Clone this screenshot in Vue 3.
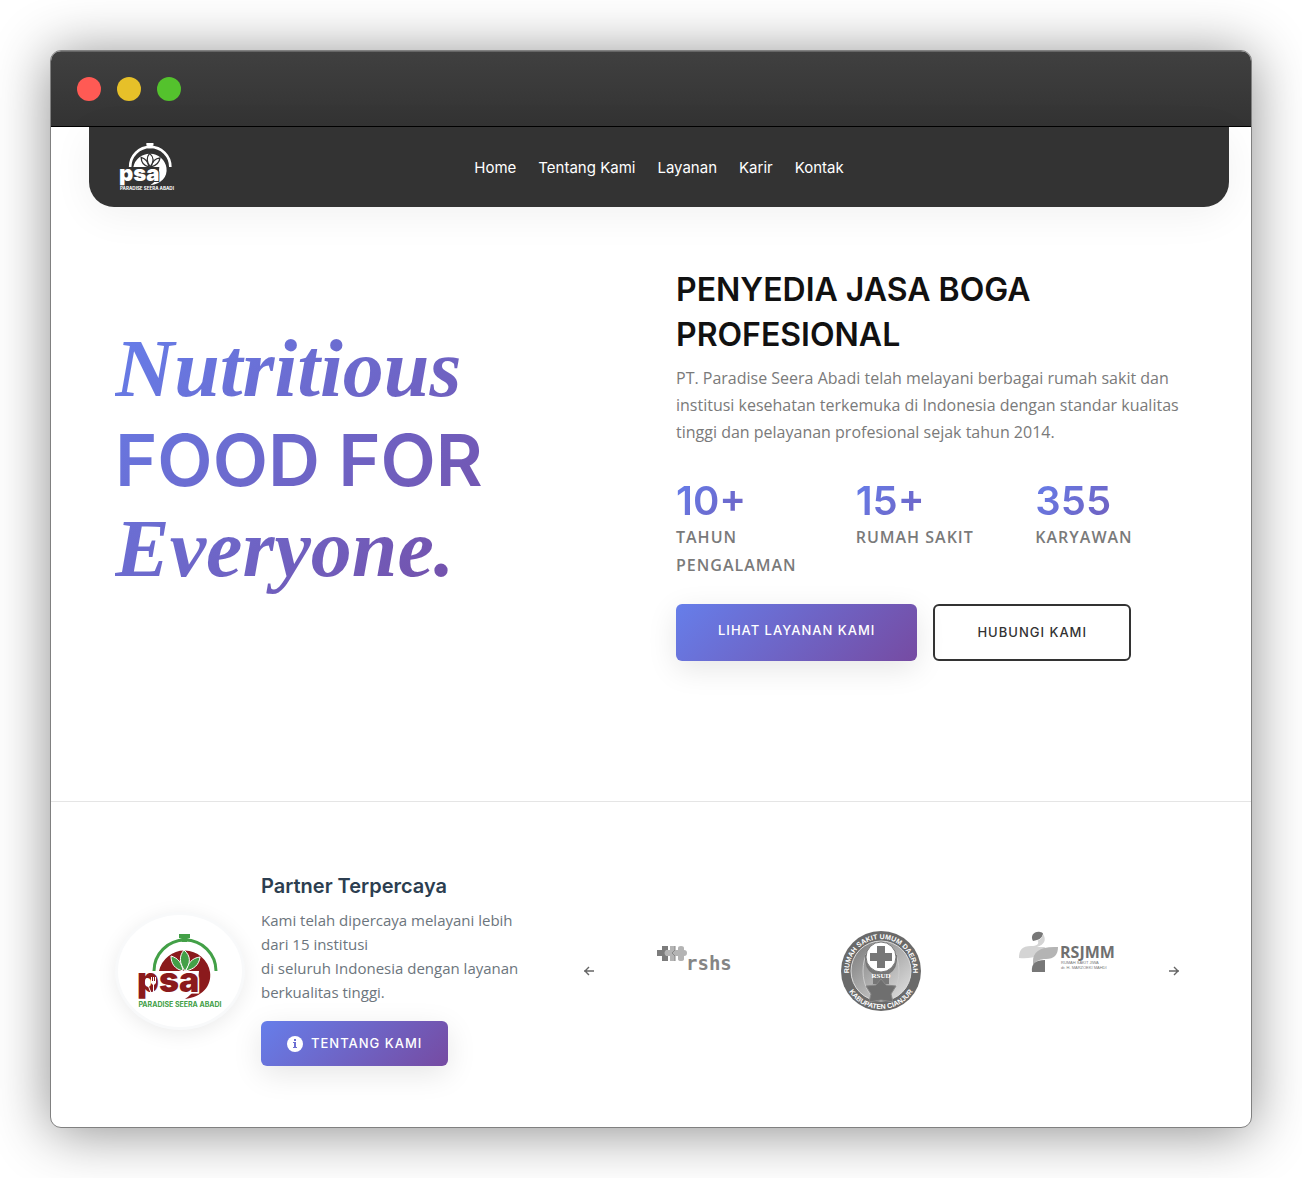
<script setup>
import { ref } from 'vue';

const menu = ['Home', 'Tentang Kami', 'Layanan', 'Karir', 'Kontak'];

const stats = [
    { value: '10+', label: 'Tahun Pengalaman' },
    { value: '15+', label: 'Rumah Sakit' },
    { value: '355', label: 'Karyawan' }
];

const partners = ['rshs', 'rsud', 'rsjmm'];
const start = ref(0);

const partnerAt = (index) => partners[(start.value + index) % partners.length];

const move = (step) => {
    start.value = (start.value + step + partners.length) % partners.length;
};
</script>

<template>
    <div class="window">
        <div class="titlebar">
            <span class="dot red"></span>
            <span class="dot yellow"></span>
            <span class="dot green"></span>
        </div>

        <header class="navWrapper">
            <nav class="navbar">
                <a href="#" class="brand" aria-label="Paradise Seera Abadi">
                    <svg class="logo" viewBox="0 0 86 74">
                        <path fill="none" stroke="#fff" stroke-width="4" d="M17 37a31 31 0 0 1 62 0" />
                        <path fill="#fff" d="M42 0h11v4l-3 1v3h-5V5l-3-1z" />
                        <path fill="#fff" d="M22 37a26 26 0 0 1 51 1c2 14-8 25-25 27 9-6 13-12 14-28z" />
                        <g fill="#fff" stroke="#333" stroke-width="2">
                            <path d="M46 37c-8-2-12-7-12-15 7 2 11 7 12 15z" />
                            <path d="M49 37c8-2 13-6 14-14-8 1-12 6-14 14z" />
                            <path d="M48 37c-6-8-6-15-1-21 7 6 7 13 1 21z" />
                        </g>
                        <text class="psa" x="0" y="58" fill="#fff" stroke="#333">psa</text>
                        <text class="psaName" x="43" y="73" fill="#fff" text-anchor="middle">PARADISE SEERA ABADI</text>
                    </svg>
                </a>
                <ul class="menu">
                    <li v-for="item in menu" :key="item"><a href="#">{{ item }}</a></li>
                </ul>
            </nav>
        </header>

        <section class="hero">
            <h1 class="slogan">
                <em>Nutritious</em><br />FOOD FOR<br /><em>Everyone.</em>
            </h1>
            <div class="intro">
                <h2>PENYEDIA JASA BOGA PROFESIONAL</h2>
                <p>PT. Paradise Seera Abadi telah melayani berbagai rumah sakit dan institusi kesehatan terkemuka di Indonesia dengan standar kualitas tinggi dan pelayanan profesional sejak tahun 2014.</p>
                <div class="stats">
                    <div v-for="stat in stats" :key="stat.label">
                        <div class="value">{{ stat.value }}</div>
                        <div class="label">{{ stat.label }}</div>
                    </div>
                </div>
                <div class="actions">
                    <a href="#" class="btn primary">LIHAT LAYANAN KAMI</a>
                    <a href="#" class="btn outline">HUBUNGI KAMI</a>
                </div>
            </div>
        </section>

        <section class="partners">
            <div class="about">
                <div class="badge">
                    <svg class="badgeLogo" viewBox="0 0 86 74">
                        <path fill="none" stroke="#43a047" stroke-width="3" d="M17 37a31 31 0 0 1 62 0" />
                        <path fill="#43a047" d="M42 0h11v4l-3 1v3h-5V5l-3-1z" />
                        <path fill="#8b1a1c" d="M22 37a26 26 0 0 1 51 1c2 14-8 25-25 27 9-6 13-12 14-28z" />
                        <g fill="#43a047" stroke="#fff" stroke-width="1">
                            <path d="M46 37c-8-2-12-7-12-15 7 2 11 7 12 15z" />
                            <path d="M49 37c8-2 13-6 14-14-8 1-12 6-14 14z" />
                            <path d="M48 37c-6-8-6-15-1-21 7 6 7 13 1 21z" />
                        </g>
                        <text class="psa" x="0" y="58" fill="#8b1a1c" stroke="#fff">psa</text>
                        <g fill="#fff">
                            <ellipse cx="10" cy="48" rx="2" ry="4" />
                            <path d="M10 50h1l4 10h-1zM14 43h1v4h1v-4h1v4h1v-4h1v6l-2 2v9h-1v-9l-2-2z" />
                        </g>
                        <text class="psaName" x="43" y="73" fill="#43a047" text-anchor="middle">PARADISE SEERA ABADI</text>
                    </svg>
                </div>
                <div class="aboutText">
                    <h3>Partner Terpercaya</h3>
                    <p>Kami telah dipercaya melayani lebih dari 15 institusi<br />di seluruh Indonesia dengan layanan berkualitas tinggi.</p>
                    <a href="#" class="btn small">
                        <svg class="info" viewBox="0 0 16 16">
                            <circle cx="8" cy="8" r="8" fill="#fff" />
                            <path fill="#6c6fd3" d="M7 3h2v2H7zM6 6h3v5h1v1H6v-1h1V7H6z" />
                        </svg>
                        TENTANG KAMI
                    </a>
                </div>
            </div>

            <div class="carousel">
                <button type="button" aria-label="Sebelumnya" @click="move(-1)">
                    <svg class="arrow" viewBox="0 0 12 12"><path d="M11 6H1M6 2L2 6l4 4" /></svg>
                </button>
                <div class="slides">
                    <div v-for="index in 3" :key="index" class="slide">
                        <svg v-if="partnerAt(index - 1) === 'rshs'" class="rshs" viewBox="0 0 76 28">
                            <path fill="#7c7c7c" d="M5 1h6v4h4v6h-4v5H5v-5H0V5h5z" />
                            <path fill="#b4b4b4" d="M13 1h5v4h3V3q0-2 3-2t3 2v2q3 0 3 3t-3 3v3q0 2-3 2t-3-2v-3h-3v5h-5v-5H9q-3-3 0-6h4z" />
                            <path fill="none" stroke="#888" d="M18 1v4l-3 3 3 3v5" />
                            <text class="rshsName" x="29" y="25">rshs</text>
                        </svg>
                        <svg v-else-if="partnerAt(index - 1) === 'rsud'" class="rsud" viewBox="0 0 80 80">
                            <defs>
                                <path id="ringTop" d="M8 40a32 32 0 0 1 64 0" />
                                <path id="ringBottom" d="M2 40a38 38 0 0 0 76 0" />
                                <linearGradient id="silver" x1="0" y1="0" x2="1" y2="1">
                                    <stop offset="0" stop-color="#777" />
                                    <stop offset="1" stop-color="#e5e5e5" />
                                </linearGradient>
                            </defs>
                            <circle cx="40" cy="40" r="40" fill="#6a6a6a" />
                            <circle cx="40" cy="40" r="30" fill="url(#silver)" stroke="#ddd" />
                            <ellipse cx="40" cy="40" rx="18" ry="29" fill="none" stroke="#ccc" />
                            <path fill="#777" d="M24 24q-1 14 8 19v10h16V43q9-5 8-19z" />
                            <circle cx="40" cy="26" r="15" fill="#fff" stroke="#777" />
                            <path fill="#777" d="M36 15h8v7h7v8h-7v7h-8v-7h-7v-8h7z" />
                            <path fill="#6f6f6f" stroke="#888" d="M40 48l5 6 10 1-5 8 2 8-12-2-12 2 2-8-5-8 10-1z" />
                            <text class="rsudName" x="40" y="47" text-anchor="middle">RSUD</text>
                            <text class="ring"><textPath href="#ringTop" startOffset="50%" text-anchor="middle">RUMAH SAKIT UMUM DAERAH</textPath></text>
                            <text class="ring"><textPath href="#ringBottom" startOffset="50%" text-anchor="middle">KABUPATEN CIANJUR</textPath></text>
                        </svg>
                        <svg v-else class="rsjmm" viewBox="0 0 98 42">
                            <path fill="#777" d="M14 10c-3-5 1-10 7-9 2 0 3 1 3 2-1 4-4 6-10 7z" />
                            <path fill="#d4d4d4" d="M24 3c4 6 1 11-6 13h8c-3 9-11 12-26 11 0-8 3-12 12-12 6 0 8-2 7-5l-4 1c5-1 8-4 9-8z" />
                            <path fill="#b4b4b4" d="M14 30c0-9 7-15 25-14 0 8-4 12-12 12-6 0-10 2-13 6z" />
                            <path fill="#777" d="M13 41c-1-8 3-12 13-12v12z" />
                            <text class="rsjmmName" x="41" y="27">RSJMM</text>
                            <text class="rsjmmSub" x="42" y="33">RUMAH SAKIT JIWA</text>
                            <text class="rsjmmSub" x="42" y="38">dr. H. MARZOEKI MAHDI</text>
                        </svg>
                    </div>
                </div>
                <button type="button" aria-label="Berikutnya" @click="move(1)">
                    <svg class="arrow" viewBox="0 0 12 12"><path d="M1 6h10M6 2l4 4-4 4" /></svg>
                </button>
            </div>
        </section>
    </div>
</template>

<style>
body {
    margin: 0;
    background: #fff;
}
</style>

<style scoped>
* {
    box-sizing: border-box;
}

.window {
    margin: 50px;
    border: 1px solid #808080;
    border-radius: 11px;
    overflow: hidden;
    background: #fff;
    box-shadow: 0 4px 56px rgba(0, 0, 0, 0.45);
    font-family: 'Open Sans', sans-serif;
    color: #7a7a7a;
}

.titlebar {
    display: flex;
    align-items: center;
    gap: 16px;
    height: 76px;
    padding: 0 26px;
    background: linear-gradient(#404040, #333);
    border-top: 1px solid #666;
    border-bottom: 1px solid #000;
}

.dot {
    width: 24px;
    height: 24px;
    border-radius: 50%;
}

.red { background: #ff5a54; }
.yellow { background: #e6c029; }
.green { background: #54c22d; }

.navWrapper {
    padding: 0 22px 0 38px;
}

.navbar {
    display: grid;
    grid-template-columns: 1fr auto 1fr;
    align-items: center;
    height: 80px;
    padding: 0 30px;
    border-radius: 0 0 25px 25px;
    background: #333;
    box-shadow: 0 8px 40px rgba(0, 0, 0, 0.06);
}

.logo {
    display: block;
    width: 56px;
    height: 48px;
}

.psa {
    font: 900 34px Inter, sans-serif;
    stroke-width: 3px;
    paint-order: stroke;
}

.psaName {
    font: bold 7px Inter, sans-serif;
}

.menu {
    display: flex;
    gap: 22px;
    margin: 0;
    padding: 0;
    list-style: none;
}

.menu a {
    color: #fff;
    font: 15px Inter, sans-serif;
    text-decoration: none;
}

.hero {
    display: grid;
    grid-template-columns: 1fr 1fr;
    gap: 46px;
    padding: 60px 60px 140px 64px;
    border-bottom: 1px solid #e5e5e5;
}

.slogan {
    align-self: center;
    justify-self: start;
    margin: 0;
    padding: 0 40px 8px 0;
    font: 600 72px/90px Inter, sans-serif;
    background: linear-gradient(135deg, #667eea 0%, #764ba2 100%);
    background-clip: text;
    color: transparent;
}

.slogan em {
    font-family: 'Liberation Serif', serif;
    font-size: 82px;
    font-weight: 700;
    line-height: 80px;
}

.intro h2 {
    margin: 0 0 8px;
    color: #111;
    font: 600 32px/45px Inter, sans-serif;
}

.intro p {
    margin: 0 0 32px;
    font-size: 16px;
    line-height: 27px;
}

.stats {
    display: grid;
    grid-template-columns: repeat(3, 1fr);
    gap: 24px;
    margin-bottom: 25px;
}

.value {
    font: 600 40px/45px Inter, sans-serif;
    background: linear-gradient(135deg, #667eea 0%, #764ba2 100%);
    background-clip: text;
    color: transparent;
}

.label {
    font-size: 16px;
    font-weight: 600;
    line-height: 28px;
    letter-spacing: 1px;
    text-transform: uppercase;
}

.actions {
    display: flex;
    gap: 16px;
}

.btn {
    display: inline-flex;
    border-radius: 6px;
    background: linear-gradient(135deg, #667eea 0%, #764ba2 100%);
    box-shadow: 0 8px 30px rgba(0, 0, 0, 0.1);
    color: #fff;
    font: 500 13px/21px Inter, sans-serif;
    letter-spacing: 1px;
    text-decoration: none;
}

.primary {
    padding: 16px 42px 20px;
}

.outline {
    padding: 16px 42px;
    border: 2px solid #333;
    background: none;
    box-shadow: none;
    color: #333;
}

.partners {
    display: flex;
    align-items: center;
    gap: 48px;
    padding: 74px 71px 61px 64px;
}

.about {
    display: flex;
    align-items: center;
    gap: 16px;
    width: 420px;
}

.badge {
    display: flex;
    align-items: center;
    justify-content: center;
    flex: none;
    width: 130px;
    height: 118px;
    border: 3px solid #f8f9fa;
    border-radius: 50%;
    background: #fff;
    box-shadow: 0 4px 20px rgba(0, 0, 0, 0.08);
}

.badgeLogo {
    width: 86px;
    height: 74px;
}

.about h3 {
    margin: 0 0 12px;
    color: #2c3e50;
    font: 600 20px/20px Inter, sans-serif;
}

.about p {
    margin: 0 0 17px;
    color: #6c757d;
    font-size: 15px;
    line-height: 24px;
}

.small {
    display: flex;
    align-items: center;
    gap: 8px;
    width: fit-content;
    padding: 12px 26px;
}

.info {
    width: 16px;
    height: 16px;
}

.carousel {
    display: flex;
    align-items: center;
    gap: 7px;
    flex: 1;
}

.carousel button {
    display: flex;
    padding: 0;
    border: none;
    background: none;
    cursor: pointer;
}

.arrow {
    width: 12px;
    height: 12px;
    fill: none;
    stroke: #666;
    stroke-width: 1.4;
}

.slides {
    display: grid;
    grid-template-columns: repeat(3, 1fr);
    flex: 1;
    height: 80px;
}

.slide {
    display: flex;
    justify-content: center;
}

.rshs {
    width: 76px;
    height: 28px;
    margin-top: 14px;
}

.rshsName {
    font: bold 19px 'DejaVu Sans Mono', monospace;
    fill: #858585;
}

.rsud {
    width: 80px;
    height: 80px;
}

.rsudName {
    font: bold 7px 'Liberation Serif', serif;
    fill: #fff;
}

.ring {
    font: bold 7px 'Liberation Sans', sans-serif;
    fill: #fff;
}

.rsjmm {
    width: 98px;
    height: 42px;
}

.rsjmmName {
    font: bold 16px 'Open Sans', sans-serif;
    fill: #707070;
}

.rsjmmSub {
    font: 4px 'Liberation Sans', sans-serif;
    fill: #777;
}
</style>
